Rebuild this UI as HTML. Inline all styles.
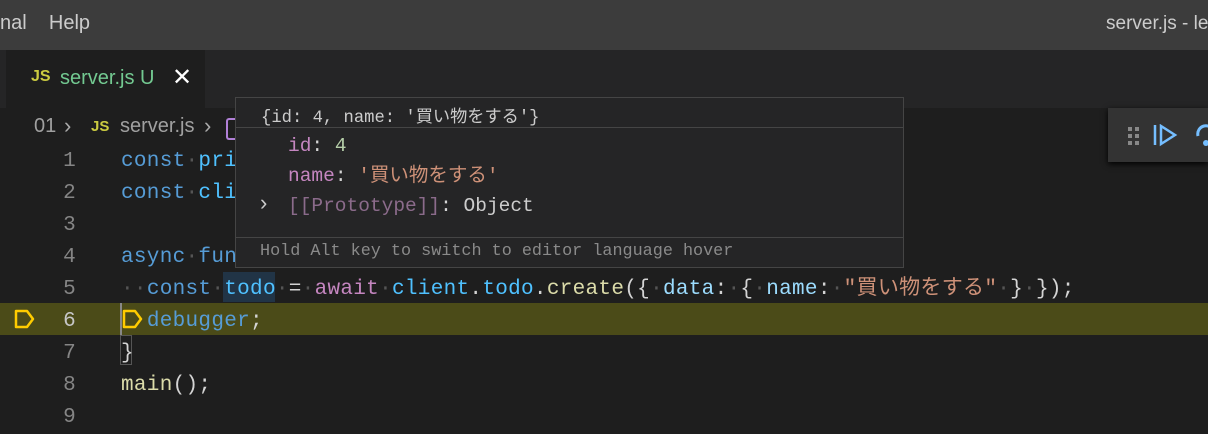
<!DOCTYPE html><html><head><meta charset="utf-8"><style>
body{margin:0;width:1208px;height:413px;overflow:hidden;background:#1e1e1e;position:relative;font-family:"Liberation Sans","Noto Sans CJK JP",sans-serif}
.a{position:absolute;white-space:pre}
.m{font-family:"Liberation Mono","Noto Sans CJK JP",monospace}
.code{font-size:21px;line-height:32px;letter-spacing:0.3px}
.ln{color:#858585;width:76px;text-align:right}
.kw{color:#569cd6}.v{color:#4fc1ff}.ctl{color:#c586c0}.p{color:#d4d4d4}.f{color:#dcdcaa}.s{color:#ce9178}.pr{color:#9cdcfe}.d{color:#555}
</style></head><body>
<div class="a" style="left:0;top:0;width:1208px;height:50px;background:#3c3c3c"></div>
<div class="a" style="left:0;top:12px;font-size:20px;color:#ccc">nal&nbsp;&nbsp;&nbsp;&nbsp;Help</div>
<div class="a" style="left:1106px;top:13px;font-size:19px;color:#ccc">server.js - le</div>
<div class="a" style="left:0;top:50px;width:1208px;height:58px;background:#252526"></div>
<div class="a" style="left:6px;top:50px;width:199px;height:58px;background:#1e1e1e"></div>
<div class="a" style="left:31px;top:68px;font-size:16px;font-weight:bold;color:#cbcb41">JS</div>
<div class="a" style="left:60px;top:67px;font-size:20px;color:#73c991">server.js U</div>
<div class="a" style="left:172px;top:63px;font-size:24px;color:#fff">✕</div>
<div class="a" style="left:34px;top:115px;font-size:20px;color:#a0a0a0">01</div>
<div class="a" style="left:64px;top:113px;font-size:22px;color:#aaa">›</div>
<div class="a" style="left:91px;top:118px;color:#cbcb41;font-size:15px;font-weight:bold">JS</div>
<div class="a" style="left:120px;top:115px;font-size:20px;color:#a0a0a0">server.js</div>
<div class="a" style="left:204px;top:113px;font-size:22px;color:#aaa">›</div>
<div class="a" style="left:226px;top:118px;width:10px;height:18px;border:2px solid #b180d7;border-right:none;border-radius:3px 0 0 3px"></div>
<div class="a" style="left:0;top:303px;width:1208px;height:32px;background:#4b4b18"></div>
<div class="a m code ln" style="left:0;top:146px">1
2
3
4
5
<span style="color:#c6c6c6">6</span>
7
8
9</div>
<div class="a" style="left:120px;top:303px;width:2px;height:32px;background:#888"></div>
<div class="a" style="left:120px;top:335px;width:12px;height:30px;border:1px solid #555;box-sizing:border-box"></div>
<div class="a" style="left:223px;top:272px;width:52px;height:30px;background:#264f78;opacity:.45"></div>
<svg class="a" style="left:14px;top:309px" width="22" height="20"><path d="M2 2H13L19 10L13 18H2Z" fill="none" stroke="#ffcc00" stroke-width="2.5" stroke-linejoin="round"/></svg>
<svg class="a" style="left:122px;top:309px" width="22" height="20"><path d="M2 2H13L19 10L13 18H2Z" fill="none" stroke="#ffcc00" stroke-width="2.5" stroke-linejoin="round"/></svg>
<div class="a m code" style="left:121px;top:146px"><span class="kw">const</span><span class="d">·</span><span class="v">pri</span>
<span class="kw">const</span><span class="d">·</span><span class="v">cli</span>

<span class="kw">async</span><span class="d">·</span><span class="kw">fun</span>
<span class="d">··</span><span class="kw">const</span><span class="d">·</span><span class="v">todo</span><span class="d">·</span><span class="p">=</span><span class="d">·</span><span class="ctl">await</span><span class="d">·</span><span class="v">client</span><span class="p">.</span><span class="v">todo</span><span class="p">.</span><span class="f">create</span><span class="p">({</span><span class="d">·</span><span class="pr">data</span><span class="p">:</span><span class="d">·</span><span class="p">{</span><span class="d">·</span><span class="pr">name</span><span class="p">:</span><span class="d">·</span><span class="s">"買い物をする"</span><span class="d">·</span><span class="p">}</span><span class="d">·</span><span class="p">});</span>
  <span class="kw">debugger</span><span class="p">;</span>
<span class="p">}</span>
<span class="f">main</span><span class="p">();</span></div>
<div class="a" style="left:235px;top:97px;width:669px;height:171px;background:#252526;border:1px solid #454545;box-sizing:border-box"></div>
<div class="a" style="left:236px;top:127px;width:667px;height:1px;background:#454545"></div>
<div class="a" style="left:236px;top:237px;width:667px;height:1px;background:#454545"></div>
<div class="a m" style="left:261px;top:102px;font-size:17.2px;color:#ccc">{id: 4, name: '買い物をする'}</div>
<div class="a m" style="left:288px;top:131px;font-size:19.5px;line-height:30px"><span class="ctl">id</span><span class="p">: </span><span style="color:#b5cea8">4</span>
<span class="ctl">name</span><span class="p">: </span><span class="s">'買い物をする'</span>
<span style="color:#8b6b8b">[[Prototype]]</span><span class="p">: </span><span style="color:#ccc">Object</span></div>
<div class="a" style="left:260px;top:190px;font-size:22px;color:#ccc">›</div>
<div class="a m" style="left:260px;top:242px;font-size:16.8px;color:#8a8a8a">Hold Alt key to switch to editor language hover</div>
<div class="a" style="left:1108px;top:108px;width:100px;height:54px;background:#333;box-shadow:0 2px 6px #000"></div>
<svg class="a" style="left:1125px;top:124px" width="90" height="24"><g fill="#888"><rect x="3" y="3" width="4" height="4"/><rect x="10" y="3" width="4" height="4"/><rect x="3" y="10" width="4" height="4"/><rect x="10" y="10" width="4" height="4"/><rect x="3" y="17" width="4" height="4"/><rect x="10" y="17" width="4" height="4"/></g><path d="M30 1V21M36 2L50 11L36 20Z" fill="none" stroke="#75beff" stroke-width="2.5"/><path d="M73 12A8 8 0 0 1 89 8" fill="none" stroke="#75beff" stroke-width="3"/><circle cx="81" cy="19" r="3" fill="#75beff"/></svg>
</body></html>
